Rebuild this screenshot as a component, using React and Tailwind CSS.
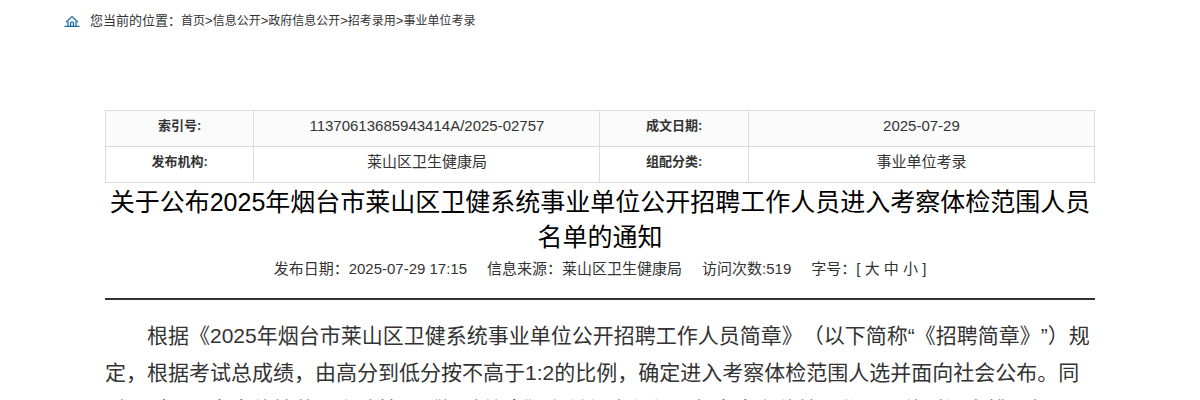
const crumbs = ['首页', '信息公开', '政府信息公开', '招考录用', '事业单位考录'];

const rows = [
  [
    { label: '索引号:', value: '11370613685943414A/2025-02757' },
    { label: '成文日期:', value: '2025-07-29' },
  ],
  [
    { label: '发布机构:', value: '莱山区卫生健康局' },
    { label: '组配分类:', value: '事业单位考录' },
  ],
];

function HomeIcon() {
  return (
    <svg className="w-4 h-3 shrink-0" viewBox="0 0 16 12" fill="none" stroke="#1f6ea6" strokeWidth="1.3" aria-hidden="true">
      <path d="M2 7.2 8 1.6l6 5.6" />
      <path d="M4 6.5V11M12 6.5V11" />
      <path d="M6.6 11V8.2a1.4 1.4 0 0 1 2.8 0V11" />
      <path d="M0.5 11.4h15" />
    </svg>
  );
}

function Breadcrumb() {
  return (
    <nav className="flex items-center h-10 mx-16 pt-px text-[13px]">
      <HomeIcon />
      <span className="ml-2.5">您当前的位置：</span>
      {crumbs.map((name, i) => (
        <span key={name}>
          {i > 0 && '>'}
          <a href="#" className="text-xs hover:text-[#1f6ea6]">{name}</a>
        </span>
      ))}
    </nav>
  );
}

function InfoTable() {
  return (
    <table className="w-full table-fixed border-collapse text-center">
      <colgroup>
        <col className="w-[15%]" />
        <col className="w-[35%]" />
        <col className="w-[15%]" />
        <col className="w-[35%]" />
      </colgroup>
      <tbody>
        {rows.map((row) => (
          <tr key={row[0].label} className="h-9 odd:bg-[#fbfbfb]">
            {row.map(({ label, value }) => [
              <th key={label} scope="row" className="border border-[#dcdcdc] pb-1.5 text-[13px] leading-5 font-bold">{label}</th>,
              <td key={value} className="border border-[#dcdcdc] pb-1.5 text-[15px] leading-5">{value}</td>,
            ])}
          </tr>
        ))}
      </tbody>
    </table>
  );
}

export default function App() {
  return (
    <div className="bg-white text-[#333] font-['Liberation_Sans','Noto_Sans_CJK_SC',sans-serif] [text-spacing-trim:space-all]" lang="zh-CN">
      <Breadcrumb />

      <main className="mx-[105px] mt-[70px]">
        <InfoTable />

        <h1 className="pt-0.5 text-center text-[25px] leading-[35px] text-black">
          关于公布2025年烟台市莱山区卫健系统事业单位公开招聘工作人员进入考察体检范围人员名单的通知
        </h1>

        {/* publish info + font size switch */}
        <div className="flex justify-center gap-5 h-[45px] pt-0.5 border-b-2 border-[#333] text-[15px] leading-6">
          <span>发布日期：2025-07-29 17:15</span>
          <span>信息来源：莱山区卫生健康局</span>
          <span>访问次数:519</span>
          <span>
            字号：[ <button type="button">大</button> <button type="button">中</button> <button type="button">小</button> ]
          </span>
        </div>

        <article className="pt-[17px] text-[21px] leading-[37px]">
          <p className="indent-[2em]">
            根据《2025年烟台市莱山区卫健系统事业单位公开招聘工作人员简章》（以下简称“《招聘简章》”）规定，根据考试总成绩，由高分到低分按不高于1:2的比例，确定进入考察体检范围人选并面向社会公布。同时，对进入考察体检范围人选按照《招聘简章》有关规定组织进行考察和体检工作，具体时间安排另行通知。
          </p>
        </article>
      </main>
    </div>
  );
}
